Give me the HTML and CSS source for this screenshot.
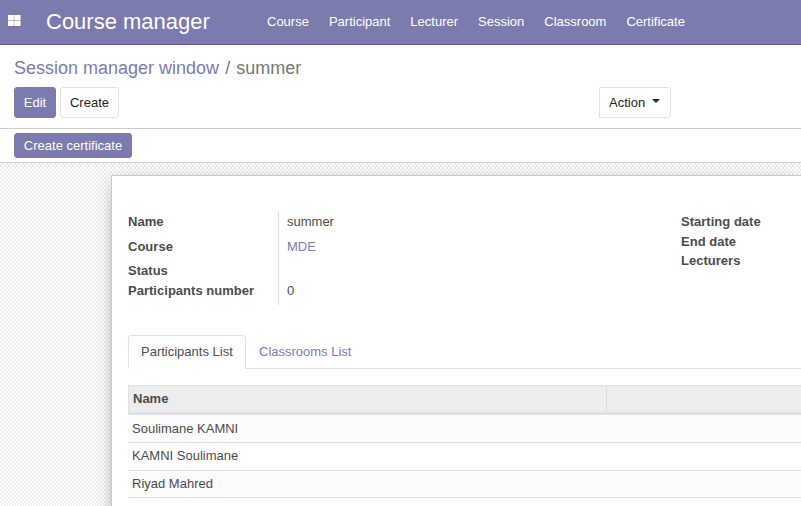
FILE: index.html
```html
<!DOCTYPE html>
<html lang="en">
<head>
<meta charset="utf-8">
<title>Course manager</title>
<link rel="stylesheet" href="styles.css">
</head>
<body>
<header class="navbar">
  <svg class="apps" width="13" height="12" viewBox="0 0 13 12"><path fill="#b9b9d6" d="M0 1h12v11H0z"/><path fill="#fff" d="M0 1h5.7v5H0zM6.6 1h6v5H6.6zM0 7h5.7v5H0zM6.6 7h6v5H6.6z"/></svg>
  <span class="brand">Course manager</span>
  <nav class="menu"><a>Course</a><a>Participant</a><a>Lecturer</a><a>Session</a><a>Classroom</a><a>Certificate</a></nav>
</header>
<section class="control">
  <div class="crumbs"><a>Session manager window</a><span class="slash">/</span><span>summer</span></div>
  <div class="buttons">
    <button class="btn primary">Edit</button><button class="btn create">Create</button>
    <button class="btn action">Action<i class="caret"></i></button>
  </div>
</section>
<section class="statusbar"><button class="btn primary certificate">Create certificate</button></section>
<main class="content">
  <article class="sheet">
    <div class="groups">
      <dl class="fields left">
        <dt>Name</dt><dd>summer</dd>
        <dt>Course</dt><dd><a>MDE</a></dd>
        <dt>Status</dt><dd></dd>
        <dt>Participants number</dt><dd>0</dd>
      </dl>
      <ul class="fields right"><li>Starting date</li><li>End date</li><li>Lecturers</li></ul>
    </div>
    <div class="tabs"><a class="tab active">Participants List</a><a class="tab">Classrooms List</a></div>
    <div class="table">
      <div class="thead"><span>Name</span></div>
      <div class="row odd">Soulimane KAMNI</div>
      <div class="row even">KAMNI Soulimane</div>
      <div class="row last">Riyad Mahred</div>
    </div>
  </article>
</main>
</body>
</html>
```
FILE: styles.css
```css
* { box-sizing: border-box; }
body { margin: 0; height: 506px; overflow: hidden; display: flex; flex-direction: column; font: 13px/20px "Liberation Sans", Arial, sans-serif; color: #4c4c4c; background: #fff; }
a { color: #7c7bad; text-decoration: none; }
.navbar { flex: none; height: 45px; background: #7c7bad; border-bottom: 1px solid #5f5e97; display: flex; align-items: center; padding-left: 8px; color: #fff; }
.apps { display: block; margin-bottom: 4px; }
.brand { width: 221px; margin-left: 25px; font-size: 22px; line-height: 44px; padding-bottom: 1px; white-space: nowrap; }
.menu { display: flex; line-height: 43px; height: 44px; gap: 20px; }
.menu a { color: #fff; white-space: nowrap; }
.control { flex: none; height: 84px; border-bottom: 1px solid #ccc; padding: 10px 0 0 14px; }
.crumbs { height: 32px; font-size: 18px; line-height: 26px; display: flex; color: #777; }
.slash { margin: 0 6px; }
.buttons { display: flex; }
.btn { height: 31px; border: 1px solid #dee2e6; border-radius: 3px; background: #fff; color: #212529; font: 13px/20px "Liberation Sans", Arial, sans-serif; padding: 0; white-space: nowrap; }
.btn.primary { background: #7c7bad; border-color: #7c7bad; color: #fff; width: 42px; }
.create { width: 59px; margin-left: 4px; }
.btn.action { width: 72px; margin-left: 480px; display: flex; align-items: center; padding-left: 9px; border-radius: 0 3px 3px 0; }
.caret { margin: 0 0 4px 7px; border: 4px solid transparent; border-top-color: #212529; border-bottom: 0; }
.statusbar { flex: none; height: 34px; border-bottom: 1px solid #ced4da; padding: 4px 0 0 14px; display: flex; }
.btn.certificate { width: 118px; height: 25px; line-height: 21px; }
.content { flex: 1; min-height: 0; overflow: hidden; padding: 12px 0 0 111px; background: repeating-conic-gradient(#ebebeb 0 25%, #fff 0 50%) 0 0 / 4px 4px; }
.sheet { height: 400px; border: 1px solid #c8c8d3; border-width: 1px 0 0 1px; background: #fff; box-shadow: 0 5px 20px -15px #000, 0 3px 16px rgba(0,0,0,.12); padding: 36px 0 0 16px; }
.groups { display: flex; height: 123px; }
.fields { margin: 0; padding: 0; font-weight: bold; }
.left { width: 553px; height: 93px; display: grid; grid-template-columns: 150px 1fr; grid-template-rows: 25px 24px 20px 24px; }
.left dt { letter-spacing: .02px; }
.left dd { margin: 0; border-left: 1px solid #ddd; padding-left: 8px; font-weight: normal; }
.right { list-style: none; line-height: 19.5px; letter-spacing: .02px; }
.tabs { display: flex; height: 34px; border-bottom: 1px solid #dee2e6; }
.tab { height: 34px; border: 1px solid transparent; padding: 6px 12px; white-space: nowrap; }
.tab.active { width: 118px; color: #4c4c4c; background: #fff; border-color: #dee2e6 #dee2e6 #fff; border-radius: 4px 4px 0 0; }
.table { margin-top: 16px; }
.thead { height: 30px; width: 700px; background: linear-gradient(#ddd, #ddd) 477px 0 / 1px 100% no-repeat #ededed; border: 1px solid #dee2e6; border-bottom-width: 3px; padding: 3px 4px; font-weight: bold; }
.row { height: 28px; border-bottom: 1px solid #dee2e6; padding: 4px; line-height: 19px; }
.even, .last { padding-top: 3px; }
.odd, .last { background: #fcfcfc; }
.last { height: 27px; }
```
